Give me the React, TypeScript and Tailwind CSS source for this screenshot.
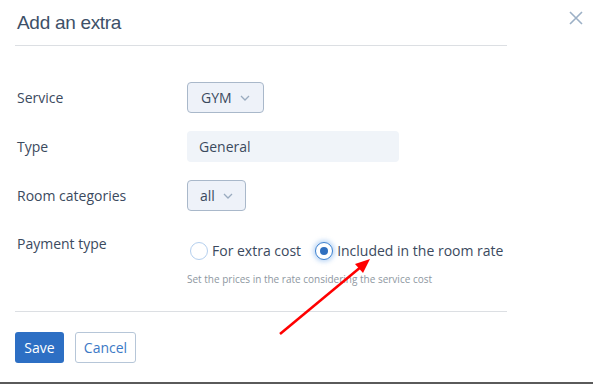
import React from 'react';

const Chevron: React.FC = () => (
  <svg width="10" height="6" viewBox="0 0 10 6" className="ml-2">
    <path d="M1 1l4 4 4-4" fill="none" stroke="#9aabbf" strokeWidth="1.3" />
  </svg>
);

const Row: React.FC<{ label: string; children: React.ReactNode; className?: string }> = ({ label, children, className }) => (
  <div className={`flex ${className ?? 'items-center'}`}>
    <div className="w-[170px] text-[14px] text-[#3b4a5e]">{label}</div>
    <div>{children}</div>
  </div>
);

const App: React.FC = () => {
  return (
    <div className="relative h-[384px] w-[593px] overflow-hidden border-b-2 border-[#5a5a5a] bg-white font-['Open_Sans',sans-serif]">
      <div className="flex items-start justify-between pl-[17px] pr-[10px] pt-[8px]">
        <h1 className="text-[19px] leading-[30px] text-[#3d5068] font-['Liberation_Sans',sans-serif] tracking-[-0.3px]">Add an extra</h1>
        <svg width="14" height="14" viewBox="0 0 14 14" className="mt-[3px]">
          <path d="M1 1l12 12M13 1L1 13" stroke="#9cb0c6" strokeWidth="1.6" />
        </svg>
      </div>
      <div className="mx-[15px] mt-[7px] h-px w-[492px] bg-[#dcdfe3]" />

      <div className="flex flex-col pl-[17px] pt-[36px]">
        <Row label="Service">
          <button className="flex h-[31px] items-center rounded-[4px] border border-[#a9b8ca] bg-[#eef2f9] px-[13px] text-[14px] text-[#3b4a5e]">
            GYM
            <Chevron />
          </button>
        </Row>
        <Row label="Type" className="mt-[18px] items-center">
          <div className="flex h-[31px] w-[212px] items-center rounded-[4px] bg-[#f0f4f9] px-[12px] text-[14px] text-[#3b4a5e]">General</div>
        </Row>
        <Row label="Room categories" className="mt-[18px] items-center">
          <button className="flex h-[31px] items-center rounded-[4px] border border-[#a9b8ca] bg-[#eef2f9] px-[12px] text-[14px] text-[#3b4a5e]">
            all
            <Chevron />
          </button>
        </Row>
        <Row label="Payment type" className="mt-[22px] items-start">
          <div className="flex flex-col pt-[7px]">
            <div className="flex items-center text-[14px] text-[#3b4a5e]">
              <span className="ml-[3px] h-[18px] w-[18px] rounded-full border border-[#b4cfee] bg-white" />
              <span className="ml-[4px]">For extra cost</span>
              <span className="ml-[14px] flex h-[18px] w-[18px] items-center justify-center rounded-full border border-[#3b80cf] bg-white shadow-[0_0_4px_2px_rgba(80,150,230,0.35)]">
                <span className="h-[8px] w-[8px] rounded-full bg-[#2f6fbf]" />
              </span>
              <span className="ml-[4px]">Included in the room rate</span>
            </div>
            <div className="mt-[11px] text-[10px] text-[#8e979f]">Set the prices in the rate considering the service cost</div>
          </div>
        </Row>
      </div>

      <div className="mx-[15px] mt-[24px] h-px w-[492px] bg-[#dcdfe3]" />
      <div className="flex gap-[11px] pl-[15px] pt-[20px]">
        <button className="h-[31px] w-[49px] rounded-[3px] bg-[#2d6fc4] text-[14px] text-white">Save</button>
        <button className="h-[31px] w-[61px] rounded-[3px] border border-[#b6c6d8] bg-white text-[14px] text-[#3c79c6]">Cancel</button>
      </div>

      <svg className="pointer-events-none absolute left-0 top-0" width="593" height="384">
        <line x1="280" y1="334" x2="362" y2="266" stroke="#ff0000" strokeWidth="2.5" />
        <polygon points="370,259 355,264 363,273" fill="#ff0000" />
      </svg>
    </div>
  );
};

export default App;
